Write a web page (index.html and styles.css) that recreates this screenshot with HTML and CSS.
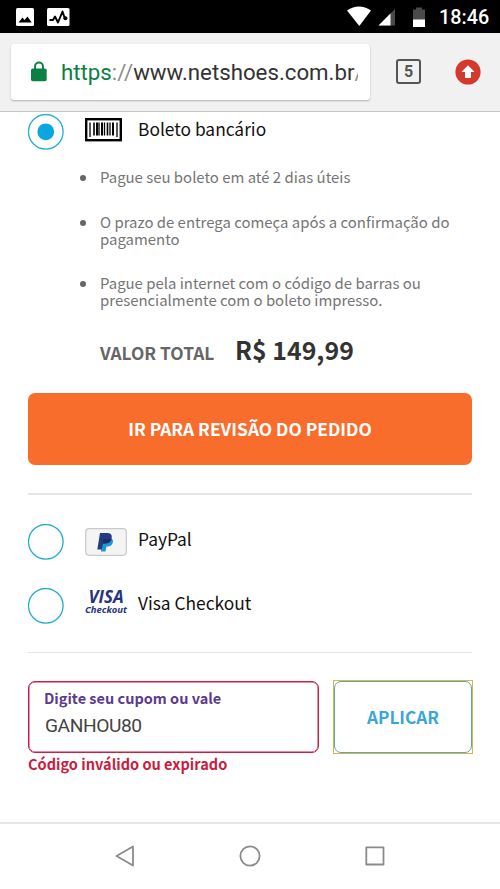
FILE: index.html
```html
<!DOCTYPE html>
<html lang="pt-BR">
<head>
<meta charset="utf-8">
<title>Netshoes</title>
<link rel="stylesheet" href="styles.css">
</head>
<body>
<header class="status">
  <svg class="status-left" width="56" height="20" viewBox="0 0 56 20">
    <rect x="0" y="1" width="18" height="18" rx="1.5" fill="#fff"/>
    <path d="M2.5 15.5 6.5 10.5 8.5 13 11.5 9.5 15.7 15.5Z" fill="#000"/>
    <rect x="31" y="1" width="22.500" height="18" rx="1.500" fill="#fff"/>
    <path d="M33.500 13H37L39 9.500 42 15.500 46.500 4.500 49 12" fill="none" stroke="#000" stroke-width="1.900" stroke-linejoin="round"/><circle cx="49.400" cy="11.300" r="2" fill="#000"/>
  </svg>
  <svg class="status-right" width="80" height="22" viewBox="0 0 80 22">
    <path d="M0 4.500Q12-3.500 24 4.500L12.300 20Z" fill="#fff"/>
    <path d="M48 3V19.500H31.500Z" fill="#4a4a4a"/><path d="M43.500 7.500V19.500H31.500Z" fill="#fff"/>
    <path d="M66 3.500H69V1.500H75V3.500H78V21H66Z" fill="#4a4a4a"/><path d="M66 13.500H78V21H66Z" fill="#fff"/>
  </svg>
  <span class="clock">18:46</span>
</header>
<div class="toolbar">
  <div class="url">
    <svg class="lock" width="16" height="21" viewBox="0 0 16 21"><path d="M4 8V5.500a4 4 0 0 1 8 0V8" fill="none" stroke="#0b8043" stroke-width="1.900"/><rect x="0" y="7.500" width="15.700" height="12.700" rx="1.800" fill="#0b8043"/></svg>
    <span class="address"><span class="scheme">https</span><span class="sep">://</span>www.netshoes.com.br<span class="sep">/</span></span>
  </div>
  <div class="tabs">5</div>
  <svg class="update" width="26" height="26" viewBox="0 0 26 26"><circle cx="13" cy="13" r="12.600" fill="#d5382c"/><path d="M13 6.300 19.600 13H16V19H10V13H6.400Z" fill="#fff"/></svg>
</div>
<main class="page">
  <div class="option first">
    <svg class="radio" width="36" height="36" viewBox="0 0 36 36"><circle class="ring" cx="17.800" cy="17.800" r="17.300"/><circle class="dot" cx="17.800" cy="17.800" r="8.400"/></svg>
    <svg class="brand" width="42" height="24" viewBox="0 0 42 24"><rect x="1.200" y="1.200" width="34.600" height="21" fill="#fff" stroke="#000" stroke-width="2.400"/><path d="M5 4.500V19M14 4.500V17.500M19.500 4.500V17.500M25 4.500V17.500M32 4.500V19" stroke="#000" stroke-width="1.300"/><path d="M9 4.500V17.500M22.500 4.500V17.500" stroke="#000" stroke-width="1.600"/><path d="M12 4.500V17.500M17 4.500V17.500M28 4.500V17.500" stroke="#000" stroke-width="2"/></svg>
    <span class="name">Boleto bancário</span>
  </div>
  <ul class="notes">
    <li><span>Pague seu boleto em até 2 dias úteis</span></li>
    <li><span>O prazo de entrega começa após a confirmação do<br>pagamento</span></li>
    <li><span>Pague pela internet com o código de barras ou<br>presencialmente com o boleto impresso.</span></li>
  </ul>
  <div class="total"><span class="total-label">VALOR TOTAL</span><strong class="price">R$ 149,99</strong></div>
  <button class="review">IR PARA REVISÃO DO PEDIDO</button>
  <hr class="rule">
  <div class="option paypal">
    <svg class="radio" width="36" height="36" viewBox="0 0 36 36"><circle class="ring" cx="17.800" cy="17.800" r="17.300"/></svg>
    <svg class="brand" width="42" height="28" viewBox="0 0 42 28"><rect x=".7" y=".7" width="40.600" height="26.600" rx="3.500" fill="#f4f4f5" stroke="#c9c9cb" stroke-width="1.200"/><path d="M17.500 10H26Q29 12 27.500 15.500 26 19 21.500 18.500L20.500 23.500H16Z" fill="#179bd7"/><path d="M15 5H22Q27.500 5 26.700 10 25.500 15.500 19.500 15.500H18L16.800 21.500H12.300Z" fill="#253b80"/><path d="M18.600 11H26.500Q25.500 15.500 19.500 15.500H18Z" fill="#222d65"/></svg>
    <span class="name">PayPal</span>
  </div>
  <div class="option visa">
    <svg class="radio" width="36" height="36" viewBox="0 0 36 36"><circle class="ring" cx="17.800" cy="17.800" r="17.300"/></svg>
    <span class="brand visa-logo"><b>VISA</b><i>Checkout</i></span>
    <span class="name">Visa Checkout</span>
  </div>
  <hr class="rule thin">
  <div class="coupon">
    <label class="field"><span class="field-label">Digite seu cupom ou vale</span><span class="field-value">GANHOU80</span></label>
    <div class="focus"><button class="apply">APLICAR</button></div>
  </div>
  <p class="error">Código inválido ou expirado</p>
</main>
<nav class="nav">
  <svg width="20" height="22" viewBox="0 0 20 22"><path d="M18 1.500V20.500L1.500 11Z"/></svg>
  <svg width="22" height="22" viewBox="0 0 22 22"><circle cx="11" cy="11" r="9.600"/></svg>
  <svg width="20" height="20" viewBox="0 0 20 20"><rect x="1.300" y="1.300" width="17.200" height="17.200"/></svg>
</nav>
</body>
</html>
```
FILE: styles.css
```css
* { box-sizing: border-box; }
body {
  margin: 0;
  width: 500px;
  height: 889px;
  display: flex;
  flex-direction: column;
  overflow: hidden;
  background: #fff;
  font-family: "Noto Sans CJK JP", "Noto Sans", sans-serif;
  white-space: nowrap;
}
button { font-family: inherit; padding: 0; }
svg { display: block; flex: none; }

.status {
  height: 33px;
  flex: none;
  display: flex;
  align-items: center;
  padding: 0 11px 0 16px;
  background: #000;
}
.status-right { margin-left: auto; margin-right: 12px; }
.clock { width: 50px; padding-top: 2px; font: 500 19.800px/31px Roboto, sans-serif; color: #fff; }

.toolbar {
  height: 79px;
  flex: none;
  display: flex;
  align-items: center;
  padding: 0 19px 1px 11px;
  background: #f1f1f1;
  border-bottom: 1px solid #c4c4c4;
}
.url {
  width: 359px;
  height: 56px;
  display: flex;
  align-items: center;
  padding: 0 10px 0 20px;
  border-radius: 3px;
  background: #fff;
  box-shadow: 0 1px 2px rgba(0, 0, 0, .28);
}
.lock { margin-right: 14px; }
.address { width: 297px; overflow: hidden; font: 22.250px/30px Roboto, sans-serif; color: #333; }
.scheme { color: #0b8043; }
.sep { color: #8c8c8c; }
.tabs {
  width: 25px;
  height: 25px;
  margin-left: 26px;
  border: 2px solid #555;
  border-radius: 3px;
  font: 700 16px/21px Roboto, sans-serif;
  text-align: center;
  color: #555;
}
.update { margin-left: auto; }

.page { flex: 1; padding: 2px 28px 0; }
.option { height: 36px; display: flex; align-items: center; color: #111; }
.radio { margin-right: 21px; }
.ring { fill: none; stroke: #22acd8; stroke-width: 1.300; }
.dot { fill: #0ba5e2; }
.brand { width: 42px; margin-right: 11px; }
.name { font-size: 17.350px; line-height: 24px; padding-bottom: 7px; }
.first .brand { margin-bottom: 4px; }

.notes { margin: 18px 0 0; padding: 0 0 0 72px; color: #757575; font-size: 14.930px; line-height: 17px; list-style: none; }
.notes li { margin-bottom: 27px; }
.notes li:first-child { margin-bottom: 28px; }
.notes li::before {
  content: "";
  float: left;
  width: 6px;
  height: 6px;
  margin: 7px 0 0 -20px;
  border-radius: 50%;
  background: #666;
}
.notes span { display: block; }

.total { height: 34px; margin-top: -3px; display: flex; align-items: baseline; padding-left: 72px; }
.total-label { width: 135px; font-size: 17.350px; font-weight: 700; line-height: 34px; color: #666; }
.price { font-size: 24.900px; line-height: 34px; color: #333; }
.review {
  display: block;
  width: 444px;
  height: 72px;
  margin-top: 27px;
  padding-bottom: 2px;
  border: 0;
  border-radius: 7px;
  background: #f86d2b;
  color: #fff;
  font-size: 17.350px;
  font-weight: 700;
}
.rule { height: 2px; margin: 28px 0; border: 0; background: #e6e6e6; }
.paypal { margin-top: 29px; }
.visa { margin-top: 28px; }
.visa-logo { display: flex; flex-direction: column; align-items: center; color: #26347f; font-family: "Open Sans", sans-serif; font-style: italic; padding-bottom: 6px; }
.visa-logo b { font-size: 17px; line-height: 14px; font-weight: 700; }
.visa-logo i { font-size: 9.500px; line-height: 12px; font-weight: 700; }
.thin { height: 1px; background: #e4e4e4; margin: 28px 0 27px; }

.coupon { display: flex; }
.field {
  width: 291px;
  height: 72px;
  flex: none;
  margin: 1px 14px 0 0;
  padding: 4px 15px;
  border: 1px solid #cb1f45;
  border-radius: 7px;
  box-shadow: inset 0 0 0 .5px #cb1f45;
}
.field-label { display: block; font-size: 14.500px; font-weight: 700; line-height: 24px; color: #5c3a8e; }
.field-value { display: block; padding-left: 1px; font: 19.200px/31px Roboto, sans-serif; letter-spacing: -.45px; color: #444; }
.focus { width: 140px; height: 74px; flex: none; border: 1px solid #d6b94a; }
.apply { display: block; width: 138px; height: 72px; padding-bottom: 2px; border: 1px solid #5da5a7; border-radius: 7px; background: #fff; color: #3aa7d8; font-size: 17.200px; font-weight: 700; }
.error { margin: -1px 0 0; font-size: 14.550px; font-weight: 700; line-height: 22px; color: #c91d40; }

.nav {
  height: 67px;
  flex: none;
  display: flex;
  justify-content: space-between;
  align-items: center;
  padding: 0 115px 2px;
  border-top: 2px solid #e6e6e6;
}
.nav svg { fill: none; stroke: #8b8b8b; stroke-width: 1.800; stroke-linejoin: round; }
```
